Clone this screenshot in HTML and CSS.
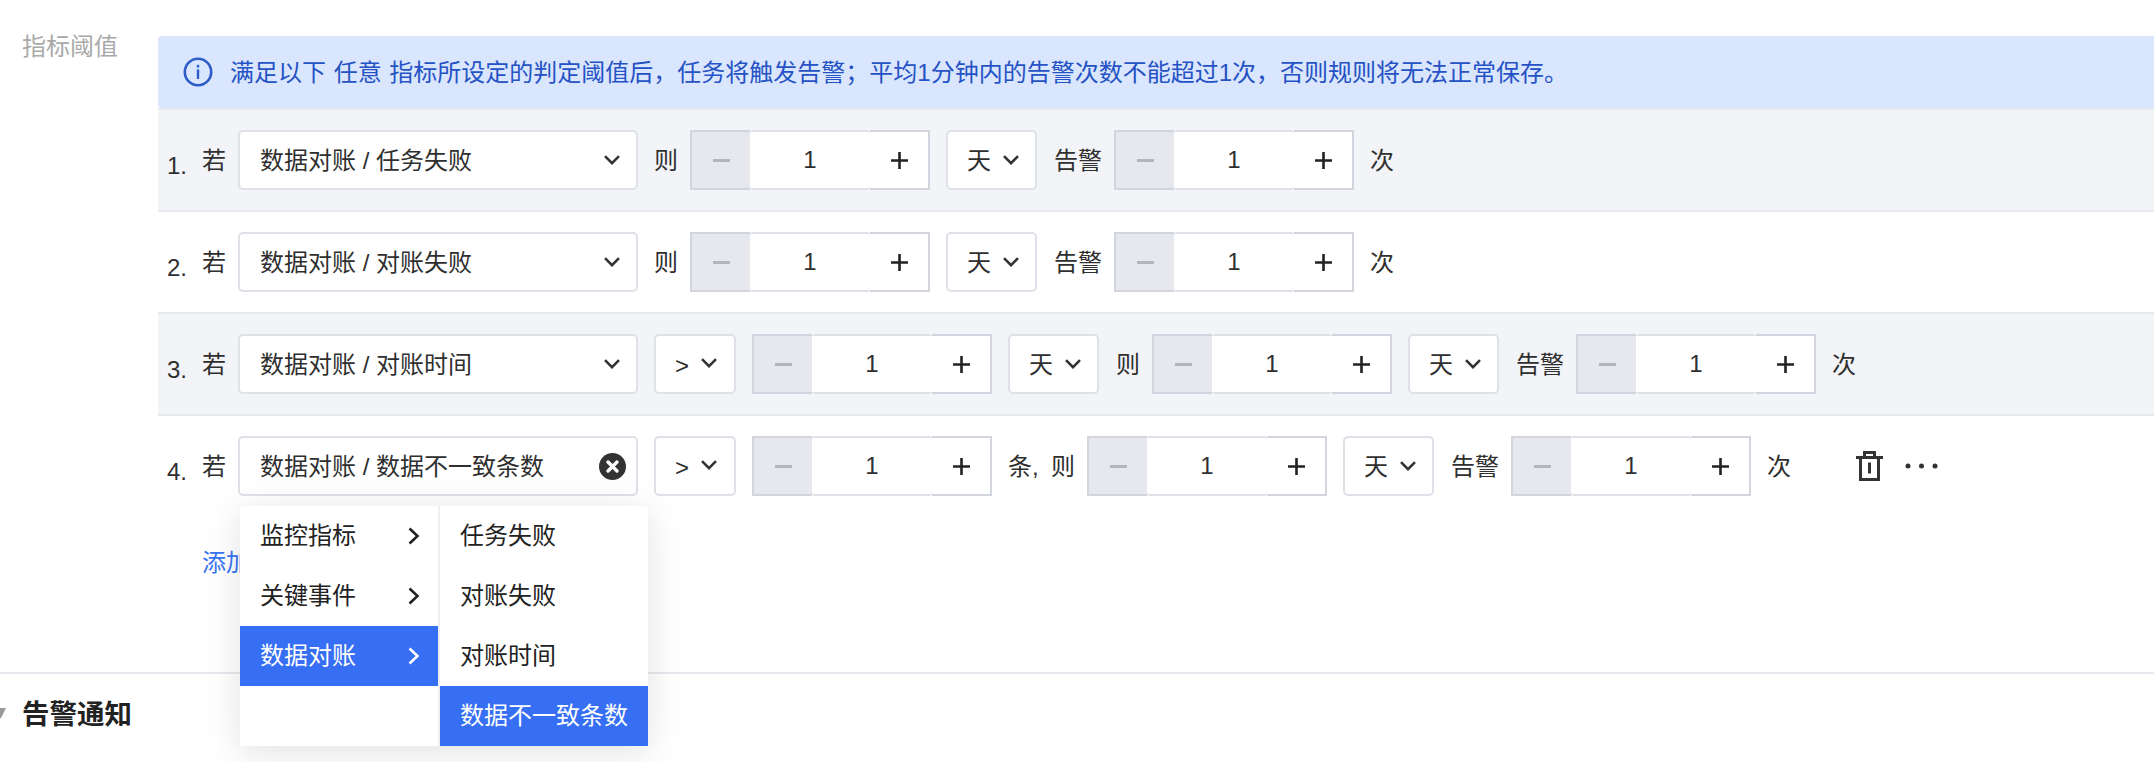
FILE: index.html
```html
<!DOCTYPE html>
<html lang="zh-CN">
<head>
<meta charset="utf-8">
<title>指标阈值</title>
<link rel="stylesheet" href="styles.css">
</head>
<body>
<main class="form-item">
  <div class="form-label">指标阈值</div>
  <div class="form-body">
    <div class="banner">
      <svg class="info-icon" viewBox="0 0 30 30" width="30" height="30"><circle cx="15" cy="15" r="13.2" fill="none" stroke="currentColor" stroke-width="2.6"/><rect x="13.8" y="7.8" width="2.4" height="2.8" fill="currentColor"/><rect x="13.8" y="12.4" width="2.4" height="9.6" fill="currentColor"/></svg>
      <span class="banner-text">满足以下 任意 指标所设定的判定阈值后，任务将触发告警；平均1分钟内的告警次数不能超过1次，否则规则将无法正常保存。</span>
    </div>

    <div class="rule rule-alt rule-first">
      <span class="num">1.</span><span class="txt">若</span>
      <div class="select select-main"><span class="label">数据对账 / 任务失败</span><svg class="chev" viewBox="0 0 16 10" width="16" height="10"><path d="M1 1.2l7 7 7-7" /></svg></div>
      <span class="txt">则</span>
      <div class="stepper"><span class="minus"><i></i></span><span class="value">1</span><span class="plus"><svg viewBox="0 0 17 17" width="17" height="17"><path d="M0 8.5h17M8.5 0v17"/></svg></span></div>
      <div class="select select-unit"><span class="label">天</span><svg class="chev" viewBox="0 0 16 10" width="16" height="10"><path d="M1 1.2l7 7 7-7" /></svg></div>
      <span class="txt">告警</span>
      <div class="stepper"><span class="minus"><i></i></span><span class="value">1</span><span class="plus"><svg viewBox="0 0 17 17" width="17" height="17"><path d="M0 8.5h17M8.5 0v17"/></svg></span></div>
      <span class="txt">次</span>
    </div>

    <div class="rule">
      <span class="num">2.</span><span class="txt">若</span>
      <div class="select select-main"><span class="label">数据对账 / 对账失败</span><svg class="chev" viewBox="0 0 16 10" width="16" height="10"><path d="M1 1.2l7 7 7-7" /></svg></div>
      <span class="txt">则</span>
      <div class="stepper"><span class="minus"><i></i></span><span class="value">1</span><span class="plus"><svg viewBox="0 0 17 17" width="17" height="17"><path d="M0 8.5h17M8.5 0v17"/></svg></span></div>
      <div class="select select-unit"><span class="label">天</span><svg class="chev" viewBox="0 0 16 10" width="16" height="10"><path d="M1 1.2l7 7 7-7" /></svg></div>
      <span class="txt">告警</span>
      <div class="stepper"><span class="minus"><i></i></span><span class="value">1</span><span class="plus"><svg viewBox="0 0 17 17" width="17" height="17"><path d="M0 8.5h17M8.5 0v17"/></svg></span></div>
      <span class="txt">次</span>
    </div>

    <div class="rule rule-alt">
      <span class="num">3.</span><span class="txt">若</span>
      <div class="select select-main"><span class="label">数据对账 / 对账时间</span><svg class="chev" viewBox="0 0 16 10" width="16" height="10"><path d="M1 1.2l7 7 7-7" /></svg></div>
      <div class="select select-op"><span class="op">&gt;</span><svg class="chev chev-up" viewBox="0 0 16 10" width="16" height="10"><path d="M1 1.2l7 7 7-7" /></svg></div>
      <div class="stepper"><span class="minus"><i></i></span><span class="value">1</span><span class="plus"><svg viewBox="0 0 17 17" width="17" height="17"><path d="M0 8.5h17M8.5 0v17"/></svg></span></div>
      <div class="select select-unit"><span class="label">天</span><svg class="chev" viewBox="0 0 16 10" width="16" height="10"><path d="M1 1.2l7 7 7-7" /></svg></div>
      <span class="txt">则</span>
      <div class="stepper"><span class="minus"><i></i></span><span class="value">1</span><span class="plus"><svg viewBox="0 0 17 17" width="17" height="17"><path d="M0 8.5h17M8.5 0v17"/></svg></span></div>
      <div class="select select-unit"><span class="label">天</span><svg class="chev" viewBox="0 0 16 10" width="16" height="10"><path d="M1 1.2l7 7 7-7" /></svg></div>
      <span class="txt">告警</span>
      <div class="stepper"><span class="minus"><i></i></span><span class="value">1</span><span class="plus"><svg viewBox="0 0 17 17" width="17" height="17"><path d="M0 8.5h17M8.5 0v17"/></svg></span></div>
      <span class="txt">次</span>
    </div>

    <div class="rule rule-last">
      <span class="num">4.</span><span class="txt">若</span>
      <div class="select select-main"><span class="label">数据对账 / 数据不一致条数</span>
        <svg class="clear" viewBox="0 0 27 27" width="27" height="27"><circle cx="13.5" cy="13.5" r="13.5" fill="#333"/><path d="M9 9l9 9M18 9l-9 9" stroke="#fff" stroke-width="3.4" fill="none" stroke-linecap="round"/></svg>
        <div class="menu">
          <ul class="menu-col menu-col-a">
            <li class="menu-item"><span>监控指标</span><svg class="menu-chev" viewBox="0 0 12 18" width="12" height="18"><path d="M1.5 1.5l8 7.5-8 7.5"/></svg></li>
            <li class="menu-item"><span>关键事件</span><svg class="menu-chev" viewBox="0 0 12 18" width="12" height="18"><path d="M1.5 1.5l8 7.5-8 7.5"/></svg></li>
            <li class="menu-item active"><span>数据对账</span><svg class="menu-chev" viewBox="0 0 12 18" width="12" height="18"><path d="M1.5 1.5l8 7.5-8 7.5"/></svg></li>
          </ul>
          <ul class="menu-col menu-col-b">
            <li class="menu-item"><span>任务失败</span></li>
            <li class="menu-item"><span>对账失败</span></li>
            <li class="menu-item"><span>对账时间</span></li>
            <li class="menu-item active"><span>数据不一致条数</span></li>
          </ul>
        </div>
      </div>
      <div class="select select-op"><span class="op">&gt;</span><svg class="chev chev-up" viewBox="0 0 16 10" width="16" height="10"><path d="M1 1.2l7 7 7-7" /></svg></div>
      <div class="stepper"><span class="minus"><i></i></span><span class="value">1</span><span class="plus"><svg viewBox="0 0 17 17" width="17" height="17"><path d="M0 8.5h17M8.5 0v17"/></svg></span></div>
      <span class="txt txt-wide">条, 则</span>
      <div class="stepper"><span class="minus"><i></i></span><span class="value">1</span><span class="plus"><svg viewBox="0 0 17 17" width="17" height="17"><path d="M0 8.5h17M8.5 0v17"/></svg></span></div>
      <div class="select select-unit"><span class="label">天</span><svg class="chev" viewBox="0 0 16 10" width="16" height="10"><path d="M1 1.2l7 7 7-7" /></svg></div>
      <span class="txt">告警</span>
      <div class="stepper"><span class="minus"><i></i></span><span class="value">1</span><span class="plus"><svg viewBox="0 0 17 17" width="17" height="17"><path d="M0 8.5h17M8.5 0v17"/></svg></span></div>
      <span class="txt">次</span>
      <svg class="trash" viewBox="0 0 27 30" width="27" height="30" fill="none" stroke="#333" stroke-width="3"><path d="M0 6.5h27M8.5 6.5V1.5h10v5M4.5 6.5v22h18v-22M13.5 11.5v11"/></svg>
      <svg class="dots" viewBox="0 0 33 6" width="33" height="6" fill="#333"><circle cx="3" cy="3" r="2.5"/><circle cx="16.5" cy="3" r="2.5"/><circle cx="30" cy="3" r="2.5"/></svg>
    </div>

    <a class="add-link">添加指标</a>
  </div>
</main>

<section class="next-section">
  <svg class="caret" viewBox="0 0 6 10" width="6" height="10"><path d="M0 0h6L1 10H0z" fill="#999"/></svg>
  <h2 class="section-title">告警通知</h2>
</section>
</body>
</html>
```
FILE: styles.css
```css
* { box-sizing: border-box; }

html, body { margin: 0; padding: 0; background: #fff; }

body {
  width: 2154px;
  height: 762px;
  overflow: hidden;
  font-family: "Liberation Sans", "Noto Sans CJK SC", sans-serif;
  font-size: 24px;
  color: #2f2f2f;
}

.form-item { display: flex; align-items: flex-start; padding-top: 36px; }

.form-label {
  width: 158px;
  flex: none;
  padding-left: 22px;
  line-height: 22px;
  color: #a9a9a9;
}

.form-body { flex: 1; min-width: 0; }

.banner {
  display: flex;
  align-items: center;
  height: 72px;
  padding-left: 25px;
  gap: 17px;
  background: #d9e6fd;
  border-radius: 4px 0 0 4px;
  color: #2552c4;
}

.banner-text { padding-bottom: 3px; word-spacing: 1px; }

.info-icon { flex: none; color: #2c5cc8; }

.rule {
  display: flex;
  align-items: center;
  padding: 20px 0 20px 9px;
  border-bottom: 2px solid #e9eaef;
}

.rule-alt { background: #f3f4f8; }
.rule-first { border-top: 2px solid #e9eaef; }
.rule-last { border-bottom-color: #fff; }

.num { width: 35px; flex: none; padding-top: 11px; }

.txt { margin-right: 12px; padding-bottom: 3px; white-space: nowrap; }
.txt-wide { word-spacing: 5.7px; }

.select {
  position: relative;
  display: flex;
  align-items: center;
  flex: none;
  height: 60px;
  background: #fff;
  border: 2px solid #dfe1e8;
  border-radius: 5px;
}

.label { padding-bottom: 3px; }

.select-main {
  width: 400px;
  margin-right: 16px;
  justify-content: space-between;
  padding: 0 10px 0 20px;
}

.select-main .chev { margin-right: 6px; }

.select-op { width: 82px; margin-right: 16px; padding-left: 19px; gap: 12px; }
.select-unit { width: 91px; margin-right: 17px; padding-left: 19px; gap: 12px; }

.op { padding-top: 4px; }

.chev { flex: none; fill: none; stroke: #333; stroke-width: 2.6; }
.chev-up { margin-top: -2px; }

.clear { flex: none; }

.stepper {
  display: flex;
  flex: none;
  width: 240px;
  height: 60px;
  margin-right: 16px;
  background: #fff;
}

.minus, .plus {
  display: flex;
  align-items: center;
  justify-content: center;
  flex: none;
  width: 60px;
  border: 2px solid #d2d5de;
}

.minus { background: #e7e8ed; border-right: 0; }
.plus { background: #fff; border-left: 0; }

.minus i { display: block; width: 17px; height: 3px; background: #b4b5ba; }

.plus svg { display: block; fill: none; stroke: #222; stroke-width: 2.6; }

.value {
  flex: 1;
  text-align: center;
  line-height: 56px;
  background: #fff;
  border-top: 2px solid #dfe1e8;
  border-bottom: 2px solid #dfe1e8;
  border-radius: 3px;
}

.trash { flex: none; margin-left: 53px; }
.dots { flex: none; margin-left: 22px; }

.add-link {
  display: block;
  margin: 28px 0 92px 44px;
  line-height: 34px;
  color: #3a74f2;
}

.next-section {
  display: flex;
  align-items: center;
  height: 88px;
  padding-bottom: 6px;
  border-top: 2px solid #e8e8ee;
}

.caret { flex: none; margin-right: 16px; margin-top: -2px; }

.section-title {
  margin: 0;
  padding-top: 1px;
  font-size: 27.5px;
  font-weight: 700;
  line-height: 40px;
  color: #222;
}

.menu {
  position: absolute;
  left: 0;
  top: 68px;
  z-index: 5;
  display: flex;
  width: 408px;
  height: 240px;
  background: #fff;
  box-shadow: 0 6px 34px rgba(0, 0, 0, 0.12);
}

.menu-col { margin: 0; padding: 0; list-style: none; }
.menu-col-a { width: 200px; border-right: 2px solid #eeeff3; }
.menu-col-b { flex: 1; }

.menu-item {
  display: flex;
  align-items: center;
  justify-content: space-between;
  height: 60px;
  padding: 0 18px 0 20px;
  color: #222;
  white-space: nowrap;
}

.menu-item span { padding-bottom: 5px; }

.menu-col-b .menu-item { padding-left: 20px; }

.menu-item.active { background: #366ef4; color: #fff; }

.menu-chev { flex: none; fill: none; stroke: currentColor; stroke-width: 2.6; }
```
